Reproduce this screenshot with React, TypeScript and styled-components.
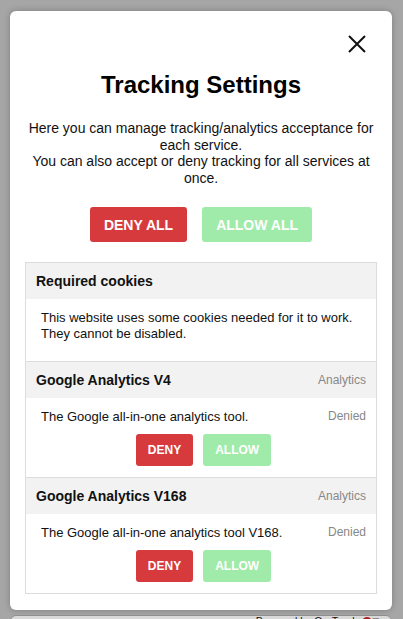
import React from "react";
import styled, { createGlobalStyle } from "styled-components";

const Global = createGlobalStyle`
  html, body { margin: 0; padding: 0; background: #a6a6a6; }
  body { font-family: "Liberation Sans", Arial, sans-serif; color: #111; height: 619px; overflow: hidden; }
  * { box-sizing: border-box; }
`;

const Page = styled.div`
  display: flex;
  flex-direction: column;
  padding: 11px 11px 0 10px;
`;

const Modal = styled.div`
  background: #fff;
  border-radius: 6px;
  box-shadow: 0 0 6px rgba(0, 0, 0, 0.25);
  padding: 22px 15px 16px 15px;
  display: flex;
  flex-direction: column;
`;

const CloseRow = styled.div`
  display: flex;
  justify-content: flex-end;
  padding-right: 9px;
  height: 22px;
`;

const CloseButton = styled.button`
  border: none;
  background: none;
  padding: 0;
  width: 22px;
  height: 22px;
  display: flex;
  align-items: center;
  justify-content: center;
  cursor: pointer;
`;

const Title = styled.h1`
  margin: 16px 0 0;
  text-align: center;
  font-size: 24px;
  line-height: 28px;
  font-weight: 700;
  color: #000;
`;

const Intro = styled.p`
  margin: 21px 0 0;
  text-align: center;
  font-size: 14px;
  line-height: 16.5px;
  color: #111;
`;

const ButtonRow = styled.div<{ $gap: number; $mt: number }>`
  display: flex;
  justify-content: center;
  gap: ${(p) => p.$gap}px;
  margin-top: ${(p) => p.$mt}px;
`;

const ActionButton = styled.button<{ $variant: "deny" | "allow"; $size: "lg" | "sm" }>`
  border: none;
  border-radius: 3px;
  color: #fff;
  font-family: "Liberation Sans", Arial, sans-serif;
  font-weight: 700;
  background: ${(p) => (p.$variant === "deny" ? "#d73a3d" : "#a0eba9")};
  font-size: ${(p) => (p.$size === "lg" ? "14px" : "12px")};
  height: ${(p) => (p.$size === "lg" ? "35px" : "32px")};
  padding: ${(p) => (p.$size === "lg" ? "0 14px" : "0 12px")};
  cursor: pointer;
`;

const Services = styled.div`
  margin-top: 20px;
  border: 1px solid #dcdcdc;
  display: flex;
  flex-direction: column;
`;

const Service = styled.section`
  & + & {
    border-top: 1px solid #dcdcdc;
  }
`;

const ServiceHeader = styled.div`
  background: #f2f2f2;
  height: 36px;
  padding: 0 10px;
  display: flex;
  align-items: center;
  justify-content: space-between;
`;

const ServiceName = styled.h2`
  margin: 0;
  font-size: 14px;
  font-weight: 700;
  color: #111;
`;

const Muted = styled.span`
  font-size: 12px;
  color: #888;
`;

const ServiceBody = styled.div<{ $pt: number; $pb: number }>`
  padding: ${(p) => p.$pt}px 10px ${(p) => p.$pb}px 15px;
  display: flex;
  flex-direction: column;
`;

const BodyTop = styled.div`
  display: flex;
  justify-content: space-between;
  align-items: flex-start;
`;

const Description = styled.p`
  margin: 0;
  font-size: 13px;
  line-height: 16px;
  color: #111;
`;

const Footer = styled.div`
  margin-top: 5px;
  height: 30px;
  background: #d9d9d9;
  border: 1px solid #8f8f8f;
  border-radius: 6px 6px 0 0;
  display: flex;
  justify-content: flex-end;
  align-items: flex-start;
  padding: 0 12px 0 0;
  gap: 4px;
  font-size: 10.5px;
  line-height: 10px;
  color: #111;
`;

const Badge = styled.span`
  display: inline-flex;
  align-items: center;
  gap: 1px;
  color: #888;
  font-weight: 700;
`;

const Dot = styled.span`
  width: 10px;
  height: 10px;
  border-radius: 50%;
  background: #b51c1c;
  display: inline-block;
  margin-top: 1px;
`;

const services = [
  { name: "Google Analytics V4", desc: "The Google all-in-one analytics tool." },
  { name: "Google Analytics V168", desc: "The Google all-in-one analytics tool V168." },
];

export default function App() {
  return (
    <>
      <Global />
      <Page>
        <Modal>
          <CloseRow>
            <CloseButton aria-label="Close">
              <svg width="18" height="18" viewBox="0 0 18 18">
                <path d="M1 1 L17 17 M17 1 L1 17" stroke="#111" strokeWidth="2" fill="none" />
              </svg>
            </CloseButton>
          </CloseRow>
          <Title>Tracking Settings</Title>
          <Intro>
            Here you can manage tracking/analytics acceptance for each service.
            <br />
            You can also accept or deny tracking for all services at once.
          </Intro>
          <ButtonRow $gap={15} $mt={21}>
            <ActionButton $variant="deny" $size="lg">DENY ALL</ActionButton>
            <ActionButton $variant="allow" $size="lg">ALLOW ALL</ActionButton>
          </ButtonRow>
          <Services>
            <Service>
              <ServiceHeader>
                <ServiceName>Required cookies</ServiceName>
              </ServiceHeader>
              <ServiceBody $pt={11} $pb={19}>
                <Description>
                  This website uses some cookies needed for it to work.
                  <br />
                  They cannot be disabled.
                </Description>
              </ServiceBody>
            </Service>
            {services.map((s) => (
              <Service key={s.name}>
                <ServiceHeader>
                  <ServiceName>{s.name}</ServiceName>
                  <Muted>Analytics</Muted>
                </ServiceHeader>
                <ServiceBody $pt={11} $pb={11}>
                  <BodyTop>
                    <Description>{s.desc}</Description>
                    <Muted>Denied</Muted>
                  </BodyTop>
                  <ButtonRow $gap={10} $mt={9}>
                    <ActionButton $variant="deny" $size="sm">DENY</ActionButton>
                    <ActionButton $variant="allow" $size="sm">ALLOW</ActionButton>
                  </ButtonRow>
                </ServiceBody>
              </Service>
            ))}
          </Services>
        </Modal>
        <Footer>
          <span>Powered by OurTrack</span>
          <Badge>
            <Dot />T
          </Badge>
        </Footer>
      </Page>
    </>
  );
}
